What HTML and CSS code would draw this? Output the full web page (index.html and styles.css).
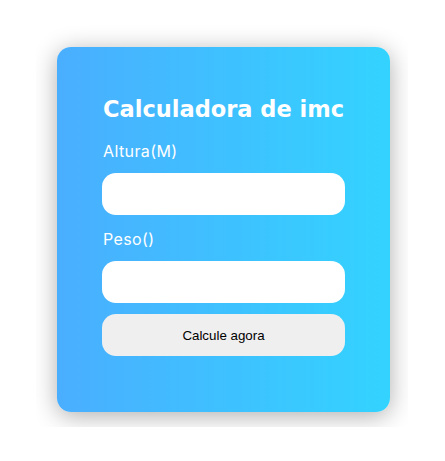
FILE: index.html
```html
<!DOCTYPE html>
<html lang="pt-BR">
<head>
<meta charset="utf-8">
<title>Calculadora de imc</title>
<link rel="stylesheet" href="styles.css">
</head>
<body>
<div class="stage">
  <div class="card">
    <h1 class="title">Calculadora de imc</h1>
    <label class="label" for="altura">Altura(M)</label>
    <input class="field" id="altura" type="text">
    <label class="label label-peso" for="peso">Peso()</label>
    <input class="field" id="peso" type="text">
    <button class="btn" type="button">Calcule agora</button>
  </div>
</div>
</body>
</html>
```
FILE: styles.css
```css
html, body {
  margin: 0;
  padding: 0;
  background: #fff;
}
.stage {
  box-sizing: border-box;
  margin-left: 36px;
  width: 372px;
  padding: 47px 18px 15px 21px;
  overflow: hidden;
}
.card {
  box-sizing: border-box;
  width: 333px;
  height: 365px;
  padding: 47px 45px 0 45px;
  border-radius: 14px;
  background: linear-gradient(to right, #4aaeff 0%, #33d3ff 100%);
  box-shadow: 0 4px 24px rgba(0, 0, 0, 0.32);
  display: flex;
  flex-direction: column;
  font-family: Inter, "Noto Sans", sans-serif;
  color: #fff;
}
.title {
  margin: 0 0 15px 1px;
  font-family: "DejaVu Sans", Inter, sans-serif;
  font-size: 22.5px;
  line-height: 30px;
  font-weight: 700;
  white-space: nowrap;
}
.label {
  display: block;
  margin: 0 0 10px 1px;
  font-size: 16px;
  line-height: 24px;
  font-weight: 400;
  letter-spacing: 0.4px;
}
.label-peso {
  margin-top: 12px;
}
.field {
  box-sizing: border-box;
  width: 243px;
  height: 42px;
  margin: 0;
  border: none;
  border-radius: 14px;
  background: #fff;
  outline: none;
  padding: 0 12px;
}
.btn {
  box-sizing: border-box;
  width: 243px;
  height: 42px;
  margin: 11px 0 0 0;
  border: none;
  border-radius: 14px;
  background: #efefef;
  color: #000;
  font-family: "Liberation Sans", Arial, sans-serif;
  font-size: 13.3333px;
  padding: 0;
}
```
